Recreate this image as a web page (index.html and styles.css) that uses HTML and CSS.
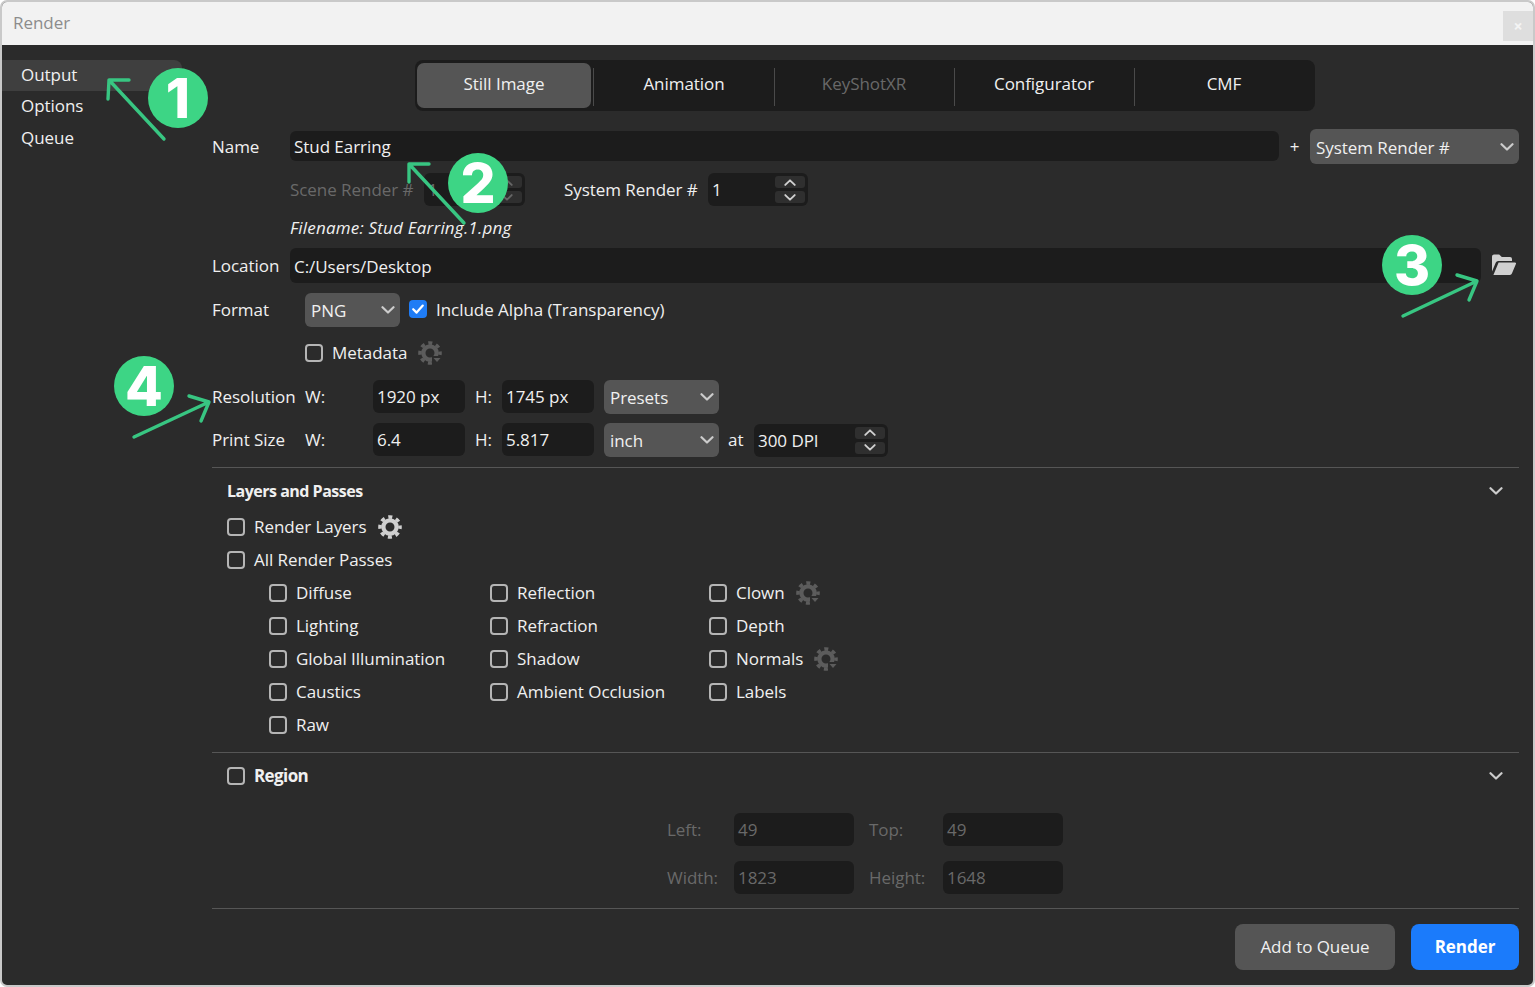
FILE: index.html
```html
<!DOCTYPE html>
<html lang="en">
<head>
<meta charset="UTF-8">
<meta name="viewport" content="width=device-width, initial-scale=1.0">
<title>Render</title>
<link rel="stylesheet" href="styles.css">
</head>
<body>

<svg class="defs" width="0" height="0">
  <symbol id="chev-down" viewBox="0 0 14 8"><path d="M1.5 1.2 7 6.5l5.5-5.3" fill="none" stroke="currentColor" stroke-width="2.2" stroke-linecap="round" stroke-linejoin="round"/></symbol>
  <symbol id="chev-up" viewBox="0 0 14 8"><path d="M1.5 6.8 7 1.5l5.5 5.3" fill="none" stroke="currentColor" stroke-width="2.2" stroke-linecap="round" stroke-linejoin="round"/></symbol>
  <symbol id="gear" viewBox="0 0 24 24">
    <circle cx="12" cy="12" r="6.6" fill="none" stroke="currentColor" stroke-width="4.2"/>
    <circle cx="12" cy="12" r="10" fill="none" stroke="currentColor" stroke-width="3.6" stroke-dasharray="4 3.854" stroke-dashoffset="2"/>
  </symbol>
  <symbol id="gear-menu" viewBox="0 0 24 24">
    <circle cx="12" cy="12" r="6.6" fill="none" stroke="currentColor" stroke-width="4.2"/>
    <circle cx="12" cy="12" r="10" fill="none" stroke="currentColor" stroke-width="3.6" stroke-dasharray="4 3.854" stroke-dashoffset="2"/>
    <path d="M14 15h10v9H14z" fill="#2b2b2b"/>
    <path d="M15.5 17h7l-3.5 4z" fill="currentColor"/>
  </symbol>
</svg>

<div class="window">
  <div class="titlebar">
    <span class="title">Render</span>
    <span class="close">&times;</span>
  </div>

  <div class="content">
    <div class="sidebar">
      <div class="side-item active">Output</div>
      <div class="side-item">Options</div>
      <div class="side-item">Queue</div>
    </div>

    <div class="main">
      <div class="tabs">
        <div class="tab active">Still Image</div>
        <div class="tab">Animation</div>
        <div class="tab dim">KeyShotXR</div>
        <div class="tab">Configurator</div>
        <div class="tab">CMF</div>
      </div>

      <div class="row row-name">
        <span class="label">Name</span>
        <div class="field grow">Stud Earring</div>
        <span class="plus">+</span>
        <div class="select select-name">System Render #<svg class="chev"><use href="#chev-down"/></svg></div>
      </div>

      <div class="row row-counters">
        <span class="dim scene-label">Scene Render #</span>
        <div class="spinner scene-spin dim">1
          <div class="spin-btns"><span><svg class="chev-sm"><use href="#chev-up"/></svg></span><span><svg class="chev-sm"><use href="#chev-down"/></svg></span></div>
        </div>
        <span class="system-label">System Render #</span>
        <div class="spinner system-spin">1
          <div class="spin-btns"><span><svg class="chev-sm"><use href="#chev-up"/></svg></span><span><svg class="chev-sm"><use href="#chev-down"/></svg></span></div>
        </div>
      </div>

      <div class="filename">Filename: Stud Earring.1.png</div>

      <div class="row row-location">
        <span class="label">Location</span>
        <div class="field grow">C:/Users/Desktop</div>
        <svg class="folder" viewBox="0 0 24 21">
          <path d="M0 2.5A2 2 0 0 1 2 .5h5.2l2.6 2.6H18a2 2 0 0 1 2 2V7H6.2a2.6 2.6 0 0 0-2.4 1.6L0 17.5z" fill="#d0d0d0"/>
          <path d="M6.6 8.6H23a1 1 0 0 1 .9 1.4l-4 9.6a2.2 2.2 0 0 1-2 1.4H1.4z" fill="#d0d0d0"/>
        </svg>
      </div>

      <div class="row row-format">
        <span class="label label-short">Format</span>
        <div class="select select-format">PNG<svg class="chev"><use href="#chev-down"/></svg></div>
        <span class="check checked">
          <svg viewBox="0 0 18 18"><path d="M4.2 9.2 7.6 12.6 13.8 5.6" fill="none" stroke="#fff" stroke-width="2.2" stroke-linecap="round" stroke-linejoin="round"/></svg>
        </span>
        <span class="check-text">Include Alpha (Transparency)</span>
      </div>

      <div class="row row-meta">
        <span class="check"></span>
        <span class="check-text">Metadata</span>
        <svg class="gear off"><use href="#gear-menu"/></svg>
      </div>

      <div class="row row-size">
        <span class="label label-short">Resolution</span>
        <span class="axis-w">W:</span>
        <div class="field size-field">1920 px</div>
        <span class="axis-h">H:</span>
        <div class="field size-field">1745 px</div>
        <div class="select select-unit">Presets<svg class="chev"><use href="#chev-down"/></svg></div>
      </div>

      <div class="row row-size row-print">
        <span class="label label-short">Print Size</span>
        <span class="axis-w">W:</span>
        <div class="field size-field">6.4</div>
        <span class="axis-h">H:</span>
        <div class="field size-field">5.817</div>
        <div class="select select-unit">inch<svg class="chev"><use href="#chev-down"/></svg></div>
        <span class="at">at</span>
        <div class="spinner dpi-spin">300 DPI
          <div class="spin-btns"><span><svg class="chev-sm"><use href="#chev-up"/></svg></span><span><svg class="chev-sm"><use href="#chev-down"/></svg></span></div>
        </div>
      </div>

      <div class="section layers">
        <div class="section-head">
          <span class="section-title">Layers and Passes</span>
          <svg class="section-chev"><use href="#chev-down"/></svg>
        </div>
        <div class="opt opt-layers"><span class="check"></span><span class="check-text">Render Layers</span><svg class="gear"><use href="#gear"/></svg></div>
        <div class="opt opt-all"><span class="check"></span><span class="check-text">All Render Passes</span></div>

        <div class="passes">
          <div class="pass-col col-a">
            <div class="opt"><span class="check"></span><span class="check-text">Diffuse</span></div>
            <div class="opt"><span class="check"></span><span class="check-text">Lighting</span></div>
            <div class="opt"><span class="check"></span><span class="check-text">Global Illumination</span></div>
            <div class="opt"><span class="check"></span><span class="check-text">Caustics</span></div>
            <div class="opt"><span class="check"></span><span class="check-text">Raw</span></div>
          </div>
          <div class="pass-col col-b">
            <div class="opt"><span class="check"></span><span class="check-text">Reflection</span></div>
            <div class="opt"><span class="check"></span><span class="check-text">Refraction</span></div>
            <div class="opt"><span class="check"></span><span class="check-text">Shadow</span></div>
            <div class="opt"><span class="check"></span><span class="check-text">Ambient Occlusion</span></div>
          </div>
          <div class="pass-col">
            <div class="opt"><span class="check"></span><span class="check-text">Clown</span><svg class="gear off"><use href="#gear-menu"/></svg></div>
            <div class="opt"><span class="check"></span><span class="check-text">Depth</span></div>
            <div class="opt"><span class="check"></span><span class="check-text">Normals</span><svg class="gear off"><use href="#gear-menu"/></svg></div>
            <div class="opt"><span class="check"></span><span class="check-text">Labels</span></div>
          </div>
        </div>
      </div>

      <div class="section region">
        <div class="section-head">
          <span class="check"></span>
          <span class="section-title region-title">Region</span>
          <svg class="section-chev"><use href="#chev-down"/></svg>
        </div>
        <div class="region-grid">
          <span class="dim">Left:</span><div class="field region-field dim">49</div>
          <span class="dim label-gap">Top:</span><div class="field region-field dim">49</div>
          <span class="dim">Width:</span><div class="field region-field dim">1823</div>
          <span class="dim label-gap">Height:</span><div class="field region-field dim">1648</div>
        </div>
      </div>

      <div class="footer">
        <div class="btn">Add to Queue</div>
        <div class="btn btn-primary">Render</div>
      </div>
    </div>
  </div>
</div>

<!-- callouts drawn on top of the screenshot -->
<svg class="arrows" viewBox="0 0 1535 987">
  <g fill="none" stroke="#38c682" stroke-width="3.4" stroke-linecap="round" stroke-linejoin="round">
    <path d="M164 139 109 80M129 80H109L108 99"/>
    <path d="M464 223 409 164M429 164H409L409 182"/>
    <path d="M1403 316 1477 281M1457 275 1477 281 1469 300"/>
    <path d="M134 437 209 402M189 396 209 402 201 421"/>
  </g>
</svg>
<div class="badge badge-1">1</div>
<div class="badge badge-2">2</div>
<div class="badge badge-3">3</div>
<div class="badge badge-4">4</div>

</body>
</html>
```

FILE: styles.css
```css
/* General Styles */
* {
  box-sizing: border-box;
}

body {
  margin: 0;
  background-color: #fff;
  color: #f0f0f0;
  font-family: "Open Sans", "Noto Sans", sans-serif;
  font-size: 17px;
  letter-spacing: -0.05px;
  line-height: 22px;
  position: relative;
  width: 1535px;
  height: 987px;
  overflow: hidden;
}

.defs {
  position: absolute;
}

.dim {
  color: #696969;
}

.window {
  width: 1535px;
  height: 987px;
  border: 2px solid #c9c9c9;
  border-radius: 7px;
  background-color: #2b2b2b;
  overflow: hidden;
  display: flex;
  flex-direction: column;
}

.titlebar {
  height: 43px;
  flex: none;
  background-color: #f2f2f2;
  display: flex;
  align-items: center;
  justify-content: space-between;
  padding-left: 11px;
}

.title {
  margin-top: -2px;
  color: #8c8c8c;
}

.close {
  width: 30px;
  height: 30px;
  margin-top: 5px;
  background-color: #dedede;
  color: #f4f4f4;
  font-size: 16px;
  font-weight: 700;
  line-height: 30px;
  text-align: center;
}

.content {
  flex: 1;
  display: flex;
  min-height: 0;
}

/* Sidebar */
.sidebar {
  width: 180px;
  flex: none;
  padding-top: 15px;
}

.side-item {
  height: 32px;
  padding-left: 19px;
  line-height: 30px;
}

.side-item.active {
  height: 31px;
  background-color: #3f3f3f;
  border-radius: 0 8px 8px 0;
}

/* Main column */
.main {
  flex: 1;
  min-width: 0;
  padding: 15px 14px 0 30px;
}

.tabs {
  width: 900px;
  height: 51px;
  margin-left: 203px;
  padding: 3px 0 3px 2px;
  display: flex;
  background-color: #1c1c1c;
  border-radius: 8px;
}

.tab {
  width: 180px;
  height: 45px;
  line-height: 41px;
  text-align: center;
  position: relative;
}

.tab:first-child {
  width: 174px;
  margin-right: 3px;
}

.tab:not(:last-child)::after {
  content: "";
  position: absolute;
  right: -1px;
  top: 5px;
  bottom: 2px;
  width: 1px;
  background-color: #4a4a4a;
}

.tab.active {
  background-color: #555;
  border-radius: 7px;
}

.tab.active::after {
  right: -3px;
}

.row {
  display: flex;
  align-items: center;
}

.label {
  width: 78px;
  flex: none;
}

.label-short {
  width: 93px;
}

.field {
  height: 32px;
  padding-left: 4px;
  line-height: 33px;
  background-color: #1c1c1c;
  border-radius: 6px;
}

.grow {
  flex: 1;
}

.select {
  height: 34px;
  padding-left: 6px;
  line-height: 35px;
  background-color: #555;
  border-radius: 6px;
  display: flex;
  justify-content: space-between;
  align-items: center;
}

.chev {
  width: 14px;
  height: 8px;
  margin-right: 5px;
  color: #ccc;
}

.row-name {
  height: 35px;
  margin-top: 18px;
}

.row-name .field {
  height: 30px;
  margin-top: -1px;
  line-height: 31px;
}

.plus {
  width: 31px;
  flex: none;
  text-align: center;
}

.select-name {
  width: 209px;
  height: 35px;
  padding-top: 2px;
}

.select-name .chev {
  margin-top: -2px;
}

.row-counters {
  height: 33px;
  margin-top: 9px;
  padding-left: 78px;
}

.scene-label {
  width: 134px;
  flex: none;
}

.system-label {
  margin-left: 39px;
  width: 144px;
  flex: none;
}

.spinner {
  height: 33px;
  padding-left: 4px;
  line-height: 29px;
  background-color: #1c1c1c;
  border-radius: 6px;
  display: flex;
  justify-content: space-between;
  align-items: center;
}

.spin-btns {
  width: 30px;
  margin-right: 3px;
  display: flex;
  flex-direction: column;
  gap: 3px;
}

.spin-btns span {
  height: 12px;
  background-color: #2f2f2f;
  border-radius: 3px;
  display: flex;
  align-items: center;
  justify-content: center;
}

.chev-sm {
  width: 12px;
  height: 7px;
  color: #d0d0d0;
}

.scene-spin {
  width: 101px;
}

.scene-spin .chev-sm {
  color: #666;
}

.system-spin {
  width: 100px;
}

.dpi-spin {
  width: 134px;
}

.filename {
  height: 22px;
  margin-top: 11px;
  padding-left: 78px;
  font-style: italic;
  letter-spacing: 0.2px;
}

.row-location {
  height: 35px;
  margin-top: 9px;
}

.row-location .field {
  height: 35px;
  line-height: 37px;
}

.folder {
  width: 24px;
  height: 21px;
  margin: -3px 3px 0 11px;
  flex: none;
}

.row-format {
  height: 34px;
  margin-top: 10px;
}

.select-format {
  width: 95px;
}

.check {
  width: 18px;
  height: 18px;
  flex: none;
  display: block;
  border: 2px solid #b5b5b5;
  border-radius: 4px;
}

.check.checked {
  background-color: #1f7cf5;
  border: none;
}

.check.checked svg {
  display: block;
}

.check-text {
  margin-left: 9px;
}

.row-format .check {
  margin: -2px 0 0 9px;
}

.row-meta {
  height: 24px;
  margin-top: 14px;
  padding-left: 93px;
}

.gear {
  width: 24px;
  height: 24px;
  margin-left: 11px;
  flex: none;
  color: #cfcfcf;
}

.gear.off {
  color: #5c5c5c;
}

.row-size {
  height: 34px;
  margin-top: 15px;
}

.row-print {
  margin-top: 9px;
}

.axis-w {
  width: 68px;
  flex: none;
}

.axis-h {
  width: 27px;
  margin-left: 10px;
  flex: none;
}

.size-field {
  width: 92px;
  height: 33px;
  margin-top: -1px;
}

.select-unit {
  width: 115px;
  margin-left: 10px;
}

.at {
  width: 26px;
  margin-left: 9px;
  flex: none;
}

.section {
  border-top: 1px solid #565656;
}

.section-head {
  height: 45px;
  padding: 0 15px;
  display: flex;
  align-items: center;
}

.section-title {
  font-size: 16px;
  font-weight: 700;
  flex: 1;
  letter-spacing: -0.5px;
}

.section-chev {
  width: 14px;
  height: 8px;
  margin-right: 1px;
  color: #ccc;
}

.layers {
  height: 285px;
  margin-top: 10px;
}

.opt {
  height: 33px;
  padding-left: 15px;
  display: flex;
  align-items: center;
}

.opt-layers {
  margin-top: -3px;
}

.passes {
  display: flex;
  padding-left: 57px;
}

.pass-col .opt {
  padding-left: 0;
}

.col-a {
  width: 221px;
}

.col-b {
  width: 219px;
}

.region {
  height: 156px;
}

.region .section-head {
  height: 46px;
}

.region-title {
  margin-left: 9px;
  font-size: 17px;
  letter-spacing: -0.6px;
}

.region-grid {
  width: 396px;
  margin: 14px 0 0 455px;
  display: grid;
  grid-template-columns: 67px 120px 89px 120px;
  row-gap: 15px;
  align-items: center;
}

.region-field {
  height: 33px;
}

.label-gap {
  padding-left: 15px;
}

.footer {
  border-top: 1px solid #565656;
  padding-top: 15px;
  display: flex;
  justify-content: flex-end;
  gap: 16px;
}

.btn {
  width: 160px;
  height: 46px;
  line-height: 46px;
  text-align: center;
  background-color: #555;
  border-radius: 8px;
}

.btn-primary {
  width: 108px;
  background-color: #1b7bfb;
  color: #fff;
  font-weight: 700;
}

/* Numbered callouts */
.arrows {
  position: absolute;
  left: 0;
  top: 0;
  width: 1535px;
  height: 987px;
}

.badge {
  position: absolute;
  width: 60px;
  height: 60px;
  border-radius: 50%;
  background-color: #3dd585;
  color: #fff;
  font-family: "Inter", sans-serif;
  font-size: 55px;
  font-weight: 800;
  line-height: 60px;
  text-align: center;
  letter-spacing: 0;
}

.badge-1 { left: 148px; top: 68px; }
.badge-2 { left: 448px; top: 153px; }
.badge-3 { left: 1382px; top: 235px; }
.badge-4 { left: 114px; top: 356px; }
```
